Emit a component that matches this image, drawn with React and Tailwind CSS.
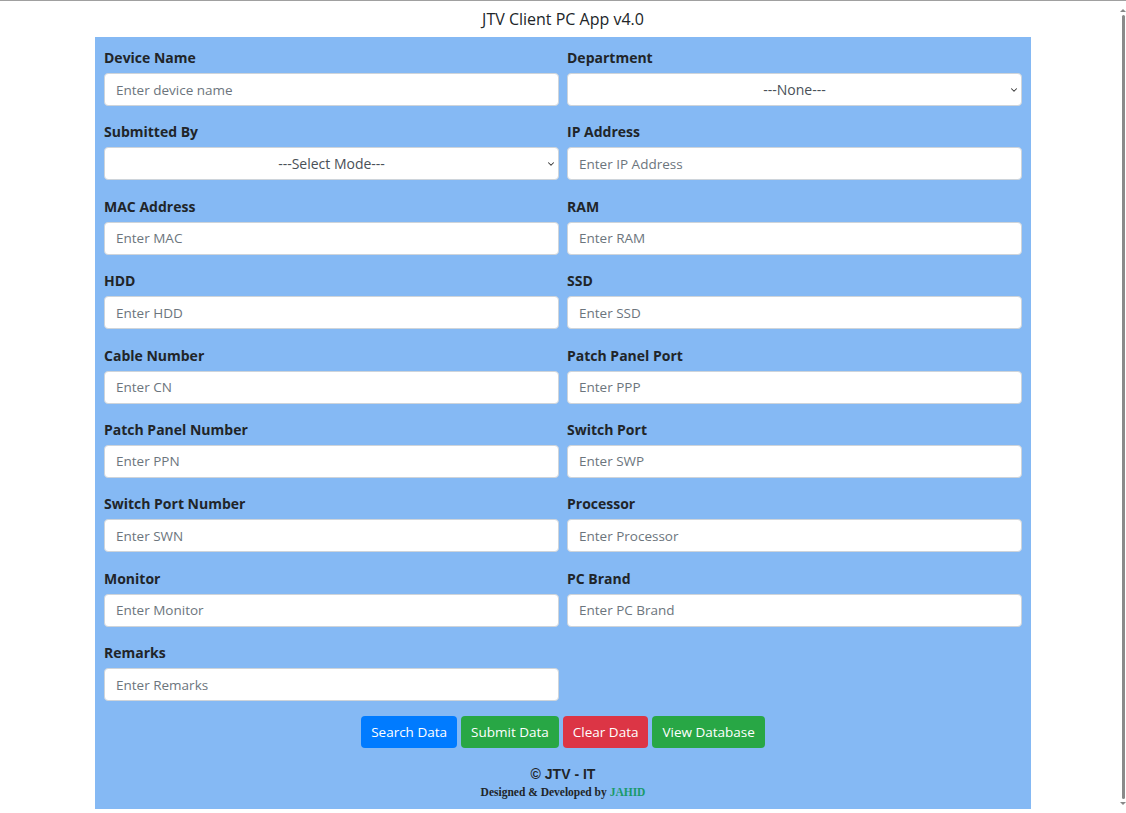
import { ChevronDown } from 'lucide-react';

const rows = [
  [
    { label: 'Device Name', placeholder: 'Enter device name' },
    { label: 'Department', select: '---None---' },
  ],
  [
    { label: 'Submitted By', select: '---Select Mode---' },
    { label: 'IP Address', placeholder: 'Enter IP Address' },
  ],
  [
    { label: 'MAC Address', placeholder: 'Enter MAC' },
    { label: 'RAM', placeholder: 'Enter RAM' },
  ],
  [
    { label: 'HDD', placeholder: 'Enter HDD' },
    { label: 'SSD', placeholder: 'Enter SSD' },
  ],
  [
    { label: 'Cable Number', placeholder: 'Enter CN' },
    { label: 'Patch Panel Port', placeholder: 'Enter PPP' },
  ],
  [
    { label: 'Patch Panel Number', placeholder: 'Enter PPN' },
    { label: 'Switch Port', placeholder: 'Enter SWP' },
  ],
  [
    { label: 'Switch Port Number', placeholder: 'Enter SWN' },
    { label: 'Processor', placeholder: 'Enter Processor' },
  ],
  [
    { label: 'Monitor', placeholder: 'Enter Monitor' },
    { label: 'PC Brand', placeholder: 'Enter PC Brand' },
  ],
  [{ label: 'Remarks', placeholder: 'Enter Remarks' }],
];

function Field({ field }) {
  return (
    <div className="flex flex-col">
      <label className="text-[14px] leading-[21px] font-bold text-[#212529] mb-[5px]">{field.label}</label>
      {field.select ? (
        <div className="relative">
          <select className="w-full h-[33px] appearance-none bg-white border border-[#ced4da] rounded-[4px] text-[14px] text-[#495057] text-center [text-align-last:center] outline-none">
            <option>{field.select}</option>
          </select>
          <ChevronDown className="absolute right-[3px] top-[12px] w-[10px] h-[10px] text-[#333]" strokeWidth={2.5} />
        </div>
      ) : (
        <input
          className="w-full h-[33px] bg-white border border-[#ced4da] rounded-[4px] px-[11px] text-[13.5px] text-[#495057] placeholder:text-[#6c757d] outline-none"
          placeholder={field.placeholder}
        />
      )}
    </div>
  );
}

export default function App() {
  return (
    <div className="relative min-h-[813px] bg-white border-t border-[#a0a0a0] font-['Open_Sans',sans-serif]">
      <h1 className="text-center text-[16px] leading-[36px] text-[#212529]">JTV Client PC App v4.0</h1>

      <div className="w-[936px] mx-auto bg-[#85b9f4] px-[9px] pt-[10px] pb-[8px]">
        <div className="flex flex-col gap-[15.4px]">
          {rows.map((row, i) => (
            <div key={i} className="grid grid-cols-2 gap-[8px]">
              {row.map((f) => (
                <Field key={f.label} field={f} />
              ))}
            </div>
          ))}
        </div>

        <div className="flex justify-center gap-[4px] mt-[15px]">
          <button className="h-[32px] px-[10px] rounded-[4px] bg-[#007bff] text-white text-[13.5px]">Search Data</button>
          <button className="h-[32px] px-[10px] rounded-[4px] bg-[#28a745] text-white text-[13.5px]">Submit Data</button>
          <button className="h-[32px] px-[10px] rounded-[4px] bg-[#dc3545] text-white text-[13.5px]">Clear Data</button>
          <button className="h-[32px] px-[10px] rounded-[4px] bg-[#28a745] text-white text-[13.5px]">View Database</button>
        </div>

        <div className="mt-[17px] text-center">
          <p className="font-['Liberation_Sans',sans-serif] font-bold text-[14px] leading-[18px] text-[#212529]">© JTV - IT</p>
          <p className="font-['Liberation_Serif',serif] font-bold text-[11.5px] leading-[18px] text-[#212529]">
            Designed &amp; Developed by <span className="text-[#1a9a6a]">JAHID</span>
          </p>
        </div>
      </div>

      {/* scrollbar */}
      <div className="absolute right-[1px] top-[8px] bottom-[8px] w-[4px] flex flex-col items-center">
        <div className="w-0 h-0 border-l-[3px] border-r-[3px] border-b-[3px] border-l-transparent border-r-transparent border-b-[#888]" />
        <div className="flex-1 w-[3px] bg-[#8a8a8a] my-[3px] rounded-full" />
        <div className="w-0 h-0 border-l-[3px] border-r-[3px] border-t-[3px] border-l-transparent border-r-transparent border-t-[#888]" />
      </div>
    </div>
  );
}
